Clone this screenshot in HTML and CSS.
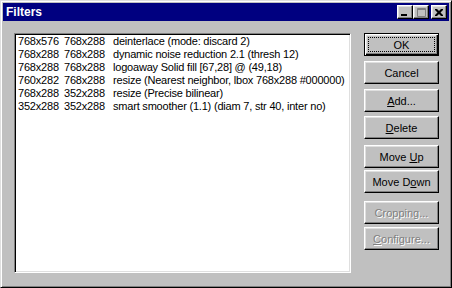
FILE: index.html
```html
<!DOCTYPE html>
<html lang="en">
<head>
  <meta charset="UTF-8">
  <title>Filters</title>
  <link rel="stylesheet" href="styles.css">
</head>
<body>
  <div class="window">
    <div class="titlebar">
      <span class="title">Filters</span>
      <div class="caption-buttons">
        <span class="cap-btn">
          <svg width="8" height="7" viewBox="0 0 8 7"><rect x="0" y="5" width="6" height="2" fill="#000"/></svg>
        </span>
        <span class="cap-btn">
          <svg width="9" height="9" viewBox="0 0 9 9"><path d="M0.5 0.5h8v8h-8z M0 1.5h9" fill="none" stroke="#808080"/></svg>
        </span>
        <span class="cap-btn close">
          <svg width="8" height="7" viewBox="0 0 8 7"><path d="M0 0h2l2 2 2-2h2v1l-2.5 2.5 2.5 2.5v1h-2l-2-2-2 2h-2v-1l2.5-2.5-2.5-2.5z" fill="#000"/></svg>
        </span>
      </div>
    </div>

    <div class="content">
      <div class="listbox">
        <div class="row"><span class="c1">768x576</span><span class="c2">768x288</span><span>deinterlace (mode: discard 2)</span></div>
        <div class="row"><span class="c1">768x288</span><span class="c2">768x288</span><span>dynamic noise reduction 2.1 (thresh 12)</span></div>
        <div class="row"><span class="c1">768x288</span><span class="c2">768x288</span><span>logoaway Solid fill [67,28] @ (49,18)</span></div>
        <div class="row"><span class="c1">760x282</span><span class="c2">768x288</span><span>resize (Nearest neighbor, lbox 768x288 #000000)</span></div>
        <div class="row"><span class="c1">768x288</span><span class="c2">352x288</span><span>resize (Precise bilinear)</span></div>
        <div class="row"><span class="c1">352x288</span><span class="c2">352x288</span><span>smart smoother (1.1) (diam 7, str 40, inter no)</span></div>
      </div>

      <div class="buttons">
        <button class="btn default">OK</button>
        <button class="btn gap-5">Cancel</button>
        <button class="btn gap-5"><u>A</u>dd...</button>
        <button class="btn gap-4"><u>D</u>elete</button>
        <button class="btn gap-6">Move <u>U</u>p</button>
        <button class="btn gap-2">Move D<u>o</u>wn</button>
        <button class="btn gap-8" disabled>Cropping...</button>
        <button class="btn gap-3" disabled><u>C</u>onfigure...</button>
      </div>
    </div>
  </div>
</body>
</html>
```

FILE: styles.css
```css
body {
  margin: 0;
  font-family: "Liberation Sans", Arial, sans-serif;
  font-size: 11px;
  background: #c0c0c0;
}
.window {
  width: 452px;
  height: 288px;
  box-sizing: border-box;
  background: #c0c0c0;
  border: 1px solid;
  border-color: #dfdfdf #000 #000 #dfdfdf;
  box-shadow: inset 1px 1px #fff, inset -1px -1px #808080;
  padding: 2px;
}
.titlebar {
  height: 18px;
  background: #000080;
  display: flex;
  align-items: center;
  justify-content: space-between;
  padding: 0 2px 0 3px;
}
.title {
  color: #fff;
  font-weight: bold;
  font-size: 12px;
}
.caption-buttons {
  display: flex;
}
.cap-btn {
  width: 16px;
  height: 14px;
  box-sizing: border-box;
  background: #c0c0c0;
  border: 1px solid;
  border-color: #fff #000 #000 #fff;
  box-shadow: inset -1px -1px #808080, inset 1px 1px #dfdfdf;
  display: flex;
  align-items: center;
  justify-content: center;
}
.cap-btn.close {
  margin-left: 2px;
}
.content {
  display: flex;
  padding: 12px 0 0 11px;
}
.listbox {
  width: 337px;
  height: 240px;
  box-sizing: border-box;
  background: #fff;
  border: 1px solid;
  border-color: #808080 #fff #fff #808080;
  box-shadow: inset 1px 1px #000, inset -1px -1px #dfdfdf;
  padding: 1px 0 0 3px;
}
.row {
  display: flex;
  height: 13px;
  line-height: 13px;
  white-space: nowrap;
  color: #000;
  letter-spacing: -0.2px;
}
.c1 {
  width: 46px;
}
.c2 {
  width: 49px;
}
.buttons {
  display: flex;
  flex-direction: column;
  margin-left: 13px;
}
.btn {
  position: relative;
  width: 75px;
  height: 23px;
  box-sizing: border-box;
  padding: 0;
  font-family: "Liberation Sans", Arial, sans-serif;
  font-size: 11px;
  color: #000;
  background: #c0c0c0;
  border: 1px solid;
  border-color: #fff #000 #000 #fff;
  box-shadow: inset -1px -1px #808080, inset 1px 1px #dfdfdf;
}
.btn.default {
  border-color: #000;
  box-shadow: inset 1px 1px #fff, inset -1px -1px #000, inset -2px -2px #808080, inset 2px 2px #dfdfdf;
}
.btn.default::after {
  content: "";
  position: absolute;
  top: 3px;
  left: 3px;
  right: 3px;
  bottom: 3px;
  border: 1px dotted #000;
}
.btn:disabled {
  color: #808080;
  text-shadow: 1px 1px #fff;
}
.gap-2 { margin-top: 2px; }
.gap-3 { margin-top: 3px; }
.gap-4 { margin-top: 4px; }
.gap-5 { margin-top: 5px; }
.gap-6 { margin-top: 6px; }
.gap-8 { margin-top: 8px; }
```
